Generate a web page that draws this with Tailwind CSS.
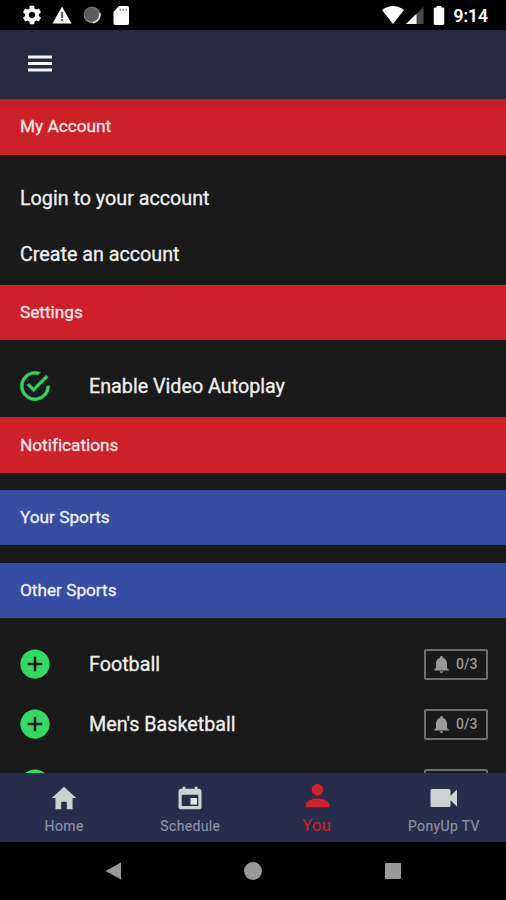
<!DOCTYPE html>
<html lang="en">
<head>
<meta charset="utf-8">
<title>My Account</title>
<script src="https://cdn.jsdelivr.net/npm/@tailwindcss/browser@4"></script>
</head>
<body class="bg-black">
<div class="flex h-[900px] w-[506px] flex-col overflow-hidden bg-black font-['Roboto','Noto_Sans',sans-serif]">
  <!-- status bar -->
  <div class="flex h-[30px] shrink-0 items-center justify-between pl-[21px] pr-[18px] text-white">
    <div class="flex items-center">
      <svg class="h-[22px] w-[22px]" viewBox="0 0 24 24" fill="currentColor"><path d="M19.43 12.98c.04-.32.07-.64.07-.98s-.03-.66-.07-.98l2.11-1.65c.19-.15.24-.42.12-.64l-2-3.46c-.12-.22-.39-.3-.61-.22l-2.49 1c-.52-.4-1.08-.73-1.69-.98l-.38-2.65C14.46 2.18 14.25 2 14 2h-4c-.25 0-.46.18-.49.42l-.38 2.65c-.61.25-1.17.59-1.69.98l-2.49-1c-.23-.09-.49 0-.61.22l-2 3.46c-.13.22-.07.49.12.64l2.11 1.65c-.04.32-.07.65-.07.98s.03.66.07.98l-2.11 1.65c-.19.15-.24.42-.12.64l2 3.46c.12.22.39.3.61.22l2.49-1c.52.4 1.08.73 1.69.98l.38 2.65c.03.24.24.42.49.42h4c.25 0 .46-.18.49-.42l.38-2.65c.61-.25 1.17-.59 1.69-.98l2.49 1c.23.09.49 0 .61-.22l2-3.46c.12-.22.07-.49-.12-.64l-2.11-1.65zM12 15.500c-1.930 0-3.500-1.570-3.500-3.500s1.570-3.500 3.500-3.500 3.500 1.570 3.500 3.500-1.570 3.500-3.500 3.500z"/></svg>
      <svg class="ml-[9px] h-[18px] w-[20px]" viewBox="0 0 20 18"><path fill="#fff" d="M10 .5 19.500 17.500H.5z"/><path fill="#666" d="M8.800 6h2.400v6H8.800zm0 7h2.400v2.200H8.800z"/></svg>
      <svg class="ml-[11px] h-[18px] w-[18px]" viewBox="0 0 18 18"><circle cx="9" cy="9" r="8.300" fill="#8a8a8a"/><circle cx="8.500" cy="8.500" r="7.200" fill="#5c5c5c"/><path d="M16.800 7A8 8 0 0 1 10 16.800" fill="none" stroke="#eee" stroke-width="1.400"/></svg>
      <svg class="ml-[12px] h-[19px] w-[16px]" viewBox="0 0 16 19"><path fill="#fff" d="M6 0h8a2 2 0 0 1 2 2v15a2 2 0 0 1-2 2H2.500a2 2 0 0 1-2-2V6z"/><path fill="#999" d="M6.500 2.500h1.500v2.500H6.500zm3 0H11v2.500H9.500zm3 0H14v2.500h-1.500z"/></svg>
    </div>
    <div class="flex items-center">
      <svg class="h-[18px] w-[22px]" viewBox="0 0 22 18"><path fill="#fff" d="M0 4Q11-4 22 4L11 18z"/></svg>
      <svg class="ml-[2px] mt-px h-[17px] w-[18px]" viewBox="0 0 18 17"><path fill="#4b4b4b" d="M17.500 0v17H0z"/><path fill="#fff" d="M10.500 6.800V17H0z"/></svg>
      <svg class="ml-[9px] h-[19px] w-[12px]" viewBox="0 0 12 20"><path fill="#fff" d="M3.500 0h5v1.500H10A1.500 1.500 0 0 1 11.500 3v15.500A1.500 1.500 0 0 1 10 20H2A1.500 1.500 0 0 1 .5 18.500V3A1.500 1.500 0 0 1 2 1.500h1.500z"/></svg>
      <span class="ml-[9px] mt-[2px] text-[17.5px] font-medium leading-[20px] [-webkit-text-stroke:0.2px]">9:14</span>
    </div>
  </div>

  <!-- app bar -->
  <header class="flex h-[69px] shrink-0 items-center bg-[#252a40] pl-[28px]">
    <svg class="mt-[-3px] h-[17px] w-[24px]" viewBox="0 0 24 17" fill="#f4f4f4"><path d="M0 .5h24v3.100H0zM0 7h24v3.100H0zM0 13.400h24v3.100H0z"/></svg>
  </header>

  <main class="flex h-[674px] shrink-0 flex-col overflow-hidden bg-[#1a1a1a] text-[19.75px] tracking-[-0.02px] text-[#efefef] [-webkit-text-stroke:0.3px] [&>*]:shrink-0">
    <h2 class="flex h-[55.5px] items-center bg-linear-to-b from-[#bb1f22] to-[#cd2129] to-15% pl-[20px] text-[17.25px] text-[#fbe9e9]">My Account</h2>
    <div class="h-[130px] pt-[16.5px]">
      <div class="flex h-[56px] items-center pl-[20px]">Login to your account</div>
      <div class="flex h-[56px] items-center pl-[20px]">Create an account</div>
    </div>
    <h2 class="flex h-[55.5px] items-center bg-[#cd2129] pl-[20px] pt-[2px] text-[17.25px] text-[#fbe9e9]">Settings</h2>
    <div class="flex h-[77px] items-center pl-[17px] pt-[15px]">
      <svg class="h-[36px] w-[36px]" viewBox="0 0 512 512" fill="#32d464" stroke="#32d464" stroke-width="7"><path d="M170.718 216.482L141.600 245.600l93.600 93.600 208-208-29.118-29.118L235.200 279.918l-64.482-63.436zM422.400 256c0 91.518-74.883 166.400-166.400 166.400S89.600 347.518 89.600 256 164.482 89.600 256 89.600c15.600 0 31.200 2.082 45.764 6.241L334 62.600C310.082 53.241 284.082 48 256 48 141.600 48 48 141.600 48 256s93.600 208 208 208 208-93.600 208-208h-41.600z"/></svg>
      <span class="ml-[36px] pt-[2px]">Enable Video Autoplay</span>
    </div>
    <h2 class="flex h-[55.5px] items-center bg-[#cd2129] pl-[20px] pt-[2px] text-[17.25px] text-[#fbe9e9]">Notifications</h2>
    <h2 class="mt-[17px] flex h-[55.5px] items-center bg-[#364da1] pl-[20px] pt-[2px] text-[17.25px] text-[#eef0fb]">Your Sports</h2>
    <h2 class="mt-[17.5px] flex h-[55px] items-center bg-[#364da1] pl-[20px] pt-[2px] text-[17.25px] text-[#eef0fb]">Other Sports</h2>
    <ul class="pt-[16.5px]">
      <li class="flex h-[60px] items-center pl-[17px] pr-[18px]">
        <svg class="h-[36px] w-[36px]" viewBox="0 0 512 512" fill="#32db64"><path d="M256 48C141.125 48 48 141.125 48 256s93.125 208 208 208 208-93.125 208-208S370.875 48 256 48zm104 226h-86v86h-36v-86h-86v-36h86v-86h36v86h86z"/></svg>
        <span class="ml-[36px] pt-[2px]">Football</span>
        <span class="ml-auto flex h-[31px] w-[64px] items-center rounded-[2px] border-2 border-[#6f6f6f] pl-[5px] text-[14px] font-medium text-[#999] [-webkit-text-stroke:0px]"><svg class="mr-[4px] h-[21px] w-[21px]" viewBox="0 0 512 512" fill="#999"><path d="M256 464c22.779 0 41.411-18.719 41.411-41.600h-82.823c0 22.881 18.633 41.600 41.412 41.600zm134.589-124.800V224.800c0-63.440-44.516-117.518-103.530-131.041V79.200c0-17.682-13.457-31.200-31.059-31.200s-31.059 13.518-31.059 31.200v14.559c-59.015 13.523-103.530 67.601-103.530 131.041v114.400L80 380.800v20.800h352v-20.800l-41.411-41.600z"/></svg>0/3</span>
      </li>
      <li class="flex h-[60px] items-center pl-[17px] pr-[18px]">
        <svg class="h-[36px] w-[36px]" viewBox="0 0 512 512" fill="#32db64"><path d="M256 48C141.125 48 48 141.125 48 256s93.125 208 208 208 208-93.125 208-208S370.875 48 256 48zm104 226h-86v86h-36v-86h-86v-36h86v-86h36v86h86z"/></svg>
        <span class="ml-[36px] pt-[2px]">Men's Basketball</span>
        <span class="ml-auto flex h-[31px] w-[64px] items-center rounded-[2px] border-2 border-[#6f6f6f] pl-[5px] text-[14px] font-medium text-[#999] [-webkit-text-stroke:0px]"><svg class="mr-[4px] h-[21px] w-[21px]" viewBox="0 0 512 512" fill="#999"><path d="M256 464c22.779 0 41.411-18.719 41.411-41.600h-82.823c0 22.881 18.633 41.600 41.412 41.600zm134.589-124.800V224.800c0-63.440-44.516-117.518-103.530-131.041V79.200c0-17.682-13.457-31.200-31.059-31.200s-31.059 13.518-31.059 31.200v14.559c-59.015 13.523-103.530 67.601-103.530 131.041v114.400L80 380.800v20.800h352v-20.800l-41.411-41.600z"/></svg>0/3</span>
      </li>
      <li class="flex h-[60px] items-center pl-[17px] pr-[18px]">
        <svg class="h-[36px] w-[36px]" viewBox="0 0 512 512" fill="#32db64"><circle cx="256" cy="256" r="208"/></svg>
        <span class="ml-auto h-[31px] w-[64px] rounded-[2px] border-2 border-[#6f6f6f]"></span>
      </li>
    </ul>
  </main>

  <!-- tab bar -->
  <nav class="grid h-[69px] shrink-0 grid-cols-4 bg-[#272e4c] pl-px text-center text-[14px] tracking-[0.35px] text-[#8e94a6] [-webkit-text-stroke:0.15px]">
    <div class="flex flex-col items-center pt-[10px]">
      <svg class="h-[30px] w-[30px]" viewBox="0 0 512 512" fill="#cdd2d2"><path d="M208 448V320h96v128h97.600V256H464L256 64 48 256h62.400v192z"/></svg>
      <span class="mt-[3px] leading-[20px]">Home</span>
    </div>
    <div class="flex flex-col items-center pt-[10px]">
      <svg class="h-[30px] w-[30px]" viewBox="0 0 512 512" fill="#cdd2d2"><path fill-rule="evenodd" d="M336 64v32H176V64h-48v32h-24c-22 0-44 18-44 40v272c0 22 18 40 44 40h304c22 0 44-18 44-40V136c0-22-18-40-44-40h-24V64h-48zM114 200h284v192H114z"/><path fill="#e4e6f0" d="M264 256h112v112H264z"/></svg>
      <span class="mt-[3px] leading-[20px]">Schedule</span>
    </div>
    <div class="flex flex-col items-center pt-[7px] text-[#cd2129]">
      <svg class="ml-px h-[31px] w-[31px]" viewBox="0 0 512 512" fill="#d4202a"><path d="M256 256c52.805 0 96-43.201 96-96s-43.195-96-96-96-96 43.201-96 96 43.195 96 96 96zm0 48c-63.598 0-192 32.402-192 96v48h384v-48c0-63.598-128.402-96-192-96z"/></svg>
      <span class="mt-[4.5px] text-[16.5px] leading-[20px]">You</span>
    </div>
    <div class="flex flex-col items-center pl-[2px] pt-[10px]">
      <svg class="h-[30px] w-[30px]" viewBox="0 0 30 30" fill="#cdd2d2"><path d="M3 6h17q1.500 0 1.500 1.500v5.200L28 6.500v17l-6.500-6.200v5.200q0 1.500-1.500 1.500H3q-1.500 0-1.500-1.500v-15Q1.500 6 3 6z"/></svg>
      <span class="mt-[3px] leading-[20px]">PonyUp TV</span>
    </div>
  </nav>

  <!-- system navigation -->
  <div class="flex h-[58px] items-center justify-between bg-black pl-[105px] pr-[105px]">
    <svg class="h-[18px] w-[16px]" viewBox="0 0 16 18"><path fill="#999" d="M16 .5v17L.5 9z"/></svg>
    <span class="h-[18px] w-[18px] rounded-full bg-[#999]"></span>
    <span class="h-[16px] w-[16px] rounded-[1px] bg-[#999]"></span>
  </div>
</div>
</body>
</html>
